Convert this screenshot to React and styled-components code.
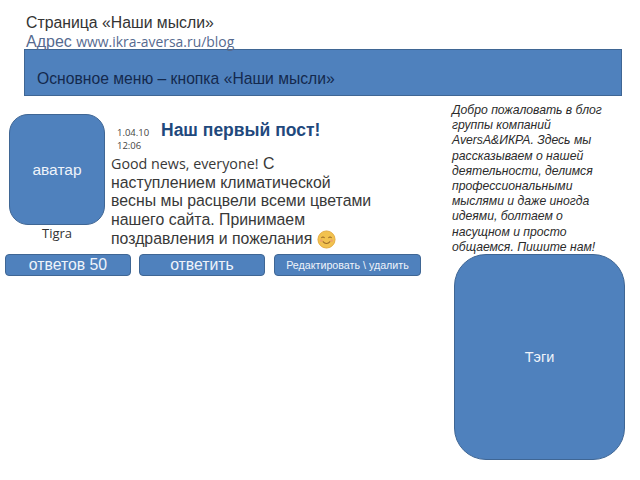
import React from 'react'
import styled, { createGlobalStyle } from 'styled-components'

const GlobalStyle = createGlobalStyle`
  html, body {
    margin: 0;
    padding: 0;
    background: #fff;
  }
`

const Smiley = () => (
  <SmileyIcon viewBox="0 0 20 20">
    <circle cx="10" cy="10" r="9" fill="#f2c24f" stroke="#e3a93c" strokeWidth="1" />
    <path d="M4.6 8.4q1.7-2 3.4 0M12 8.4q1.7-2 3.4 0" fill="none" stroke="#9a6a28" strokeWidth="1.1" />
    <path d="M6 12q4 4.4 8 0" fill="none" stroke="#9a6a28" strokeWidth="1.1" />
    <circle cx="4.6" cy="11.2" r="1.5" fill="#efa665" />
    <circle cx="15.4" cy="11.2" r="1.5" fill="#efa665" />
  </SmileyIcon>
)

export default function App() {
  return (
    <Page>
      <GlobalStyle />
      <Heading>
        <PageName>Страница «Наши мысли»</PageName>
        <Address>Адрес <AddressUrl>www.ikra-aversa.ru/blog</AddressUrl></Address>
      </Heading>
      <MenuBar>Основное меню – кнопка «Наши мысли»</MenuBar>
      <Main>
        <PostColumn>
          <Post>
            <Author>
              <Avatar>аватар</Avatar>
              <AuthorName>Tigra</AuthorName>
            </Author>
            <PostBody>
              <PostHead>
                <PostDate>1.04.10<br />12:06</PostDate>
                <PostTitle>Наш первый пост!</PostTitle>
              </PostHead>
              <PostText>
                <Latin>Good news, everyone!</Latin> С<br />
                наступлением климатической<br />
                весны мы расцвели всеми цветами<br />
                нашего сайта. Принимаем<br />
                поздравления и пожелания <Smiley />
              </PostText>
            </PostBody>
          </Post>
          <Actions>
            <ActionButton>ответов 50</ActionButton>
            <ActionButton>ответить</ActionButton>
            <ActionButton $wide>Редактировать \ удалить</ActionButton>
          </Actions>
        </PostColumn>
        <Sidebar>
          <Welcome>
            Добро пожаловать в блог<br />
            группы компаний<br />
            AversA&amp;ИКРА. Здесь мы<br />
            рассказываем о нашей<br />
            деятельности, делимся<br />
            профессиональными<br />
            мыслями и даже иногда<br />
            идеями, болтаем о<br />
            насущном и просто<br />
            общаемся. Пишите нам!
          </Welcome>
          <Tags>Тэги</Tags>
        </Sidebar>
      </Main>
    </Page>
  )
}

const Page = styled.div`
  width: 640px;
  height: 480px;
  overflow: hidden;
  box-sizing: border-box;
  padding-top: 14px;
  font-family: "Liberation Sans", Arial, sans-serif;
`

const Heading = styled.div`
  padding-left: 26px;
  height: 35px;
`

const PageName = styled.div`
  font-size: 15.8px;
  line-height: 18px;
  color: #333;
`

const Address = styled.div`
  font-size: 16px;
  line-height: 19px;
  white-space: nowrap;
  color: #566a8f;
`

const AddressUrl = styled.span`
  font-family: "Open Sans", sans-serif;
  font-size: 13.9px;
`

const MenuBar = styled.div`
  width: 598px;
  height: 47px;
  margin-left: 24px;
  box-sizing: border-box;
  padding: 20px 0 0 12px;
  font-size: 15.7px;
  line-height: 17px;
  color: #14294d;
  background: #4f81bd;
  border: 1px solid #3f6694;
`

const Main = styled.div`
  display: flex;
`

const PostColumn = styled.div`
  width: 447px;
  padding: 18px 0 0 5px;
  box-sizing: border-box;
`

const Post = styled.div`
  display: flex;
  height: 140px;
`

const Author = styled.div`
  width: 106px;
  padding-left: 4px;
  box-sizing: border-box;
  text-align: center;
`

const Avatar = styled.div`
  width: 96px;
  height: 111px;
  display: flex;
  align-items: center;
  justify-content: center;
  box-sizing: border-box;
  font-size: 15.5px;
  color: #eef3fa;
  background: #4f81bd;
  border: 1px solid #3f6694;
  border-radius: 19px;
`

const AuthorName = styled.div`
  width: 96px;
  margin-top: 0;
  font-family: "Open Sans", sans-serif;
  font-size: 13px;
  line-height: 17px;
  color: #333;
`

const PostBody = styled.div`
  flex: 1;
`

const PostHead = styled.div`
  display: flex;
  padding: 7px 0 0 6px;
  height: 34px;
`

const PostDate = styled.div`
  width: 44px;
  padding-top: 5px;
  font-family: "Open Sans", sans-serif;
  font-size: 9.5px;
  line-height: 13px;
  color: #444;
`

const PostTitle = styled.div`
  font-size: 17.5px;
  line-height: 18px;
  font-weight: 700;
  color: #1f497d;
  white-space: nowrap;
`

const PostText = styled.div`
  font-size: 15.85px;
  line-height: 18.7px;
  color: #383838;
  white-space: nowrap;
`

const Latin = styled.span`
  font-family: "Open Sans", sans-serif;
  font-size: 14.3px;
`

const SmileyIcon = styled.svg`
  display: inline-block;
  width: 19px;
  height: 19px;
  margin: -4px 0;
  vertical-align: -1px;
`

const Actions = styled.div`
  display: flex;
  gap: 8px;
`

const ActionButton = styled.div`
  width: ${props => (props.$wide ? '147px' : '126px')};
  margin-left: ${props => (props.$wide ? '1px' : '0')};
  height: 22px;
  box-sizing: border-box;
  display: flex;
  align-items: center;
  justify-content: center;
  font-size: ${props => (props.$wide ? '10.7px' : '15.8px')};
  color: #eef3fa;
  background: #4f81bd;
  border: 1px solid #3f6694;
  border-radius: 4px;
  white-space: nowrap;
`

const Sidebar = styled.div`
  flex: 1;
  padding-left: 5px;
`

const Welcome = styled.div`
  height: 158px;
  padding-top: 7px;
  box-sizing: border-box;
  font-size: 12.2px;
  line-height: 15.2px;
  font-style: italic;
  color: #2b2b2b;
  white-space: nowrap;
`

const Tags = styled.div`
  width: 171px;
  height: 206px;
  margin-left: 2px;
  box-sizing: border-box;
  display: flex;
  align-items: center;
  justify-content: center;
  font-size: 14.5px;
  color: #eef3fa;
  background: #4f81bd;
  border: 1px solid #3f6694;
  border-radius: 32px;
`
